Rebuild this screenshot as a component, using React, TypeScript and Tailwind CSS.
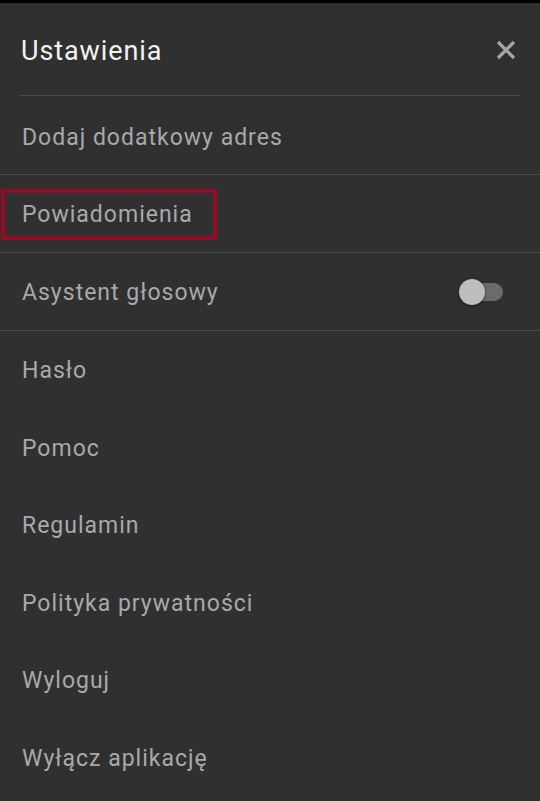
import React from "react";

const items = ["Hasło", "Pomoc", "Regulamin", "Polityka prywatności", "Wyloguj", "Wyłącz aplikację"];

export default function App() {
  return (
    <div className="w-[540px] h-[801px] bg-[#303030] flex flex-col overflow-hidden" style={{ fontFamily: "Roboto, 'Noto Sans', sans-serif" }}>
      <div className="h-[3px] bg-black shrink-0" />
      <div className="h-[93px] mx-[20px] border-b border-[#4a4a4a] flex items-center justify-between shrink-0">
        <span className="text-[27px] tracking-[0.9px] text-[#f2f2f2] pl-[1px] pt-[4px]">Ustawienia</span>
        <svg width="22" height="22" viewBox="0 0 22 22" className="mr-[3px] mt-[2px]">
          <path d="M3 3 L19 19 M19 3 L3 19" stroke="#a6a6a6" strokeWidth="3.2" strokeLinecap="butt" />
        </svg>
      </div>
      <div className="h-[79px] border-b border-[#4a4a4a] flex items-center px-[22px] shrink-0">
        <span className="text-[23px] tracking-[1px] text-[#a9a9a9] pt-[6px]">Dodaj dodatkowy adres</span>
      </div>
      <div className="h-[78px] border-b border-[#4a4a4a] flex items-center px-[1px] shrink-0">
        <div className="h-[51px] w-[216px] border-[4px] border-[#950a24] flex items-center pl-[17px] mt-[2px]">
          <span className="text-[23px] tracking-[1px] text-[#a9a9a9] pt-[2px]">Powiadomienia</span>
        </div>
      </div>
      <div className="h-[78px] border-b border-[#4a4a4a] flex items-center justify-between px-[22px] shrink-0">
        <span className="text-[23px] tracking-[1px] text-[#a9a9a9] pt-[3px]">Asystent głosowy</span>
        <div className="relative w-[44px] h-[26px] mr-[15px] flex items-center">
          <div className="absolute left-[5px] right-0 h-[18px] rounded-full bg-[#6b6b6b]" />
          <div className="absolute left-0 w-[26px] h-[26px] rounded-full bg-[#bdbdbd] shadow-[0_1px_3px_rgba(0,0,0,0.5)]" />
        </div>
      </div>
      {items.map((t) => (
        <div key={t} className="h-[77.5px] flex items-center px-[22px] shrink-0">
          <span className="text-[23px] tracking-[1px] text-[#a9a9a9] pt-[3px]">{t}</span>
        </div>
      ))}
    </div>
  );
}
